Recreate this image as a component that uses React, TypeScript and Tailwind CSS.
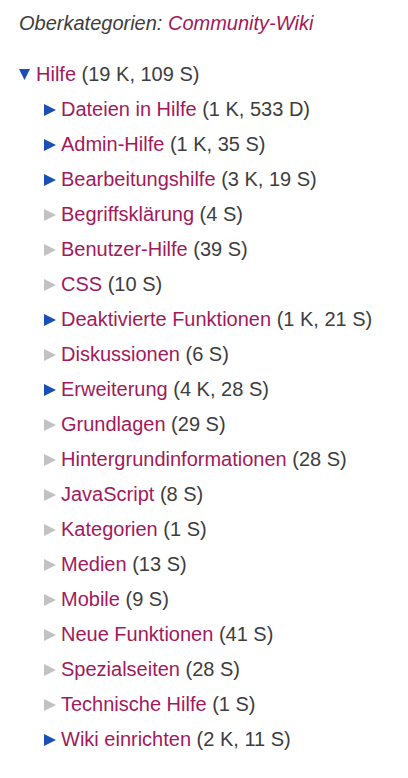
import React from "react";

const LINK = "text-[#a2195b]";

type Item = { name: string; count: string; expandable: boolean };

const items: Item[] = [
  { name: "Dateien in Hilfe", count: "(1 K, 533 D)", expandable: true },
  { name: "Admin-Hilfe", count: "(1 K, 35 S)", expandable: true },
  { name: "Bearbeitungshilfe", count: "(3 K, 19 S)", expandable: true },
  { name: "Begriffsklärung", count: "(4 S)", expandable: false },
  { name: "Benutzer-Hilfe", count: "(39 S)", expandable: false },
  { name: "CSS", count: "(10 S)", expandable: false },
  { name: "Deaktivierte Funktionen", count: "(1 K, 21 S)", expandable: true },
  { name: "Diskussionen", count: "(6 S)", expandable: false },
  { name: "Erweiterung", count: "(4 K, 28 S)", expandable: true },
  { name: "Grundlagen", count: "(29 S)", expandable: false },
  { name: "Hintergrundinformationen", count: "(28 S)", expandable: false },
  { name: "JavaScript", count: "(8 S)", expandable: false },
  { name: "Kategorien", count: "(1 S)", expandable: false },
  { name: "Medien", count: "(13 S)", expandable: false },
  { name: "Mobile", count: "(9 S)", expandable: false },
  { name: "Neue Funktionen", count: "(41 S)", expandable: false },
  { name: "Spezialseiten", count: "(28 S)", expandable: false },
  { name: "Technische Hilfe", count: "(1 S)", expandable: false },
  { name: "Wiki einrichten", count: "(2 K, 11 S)", expandable: true },
];

function RightTri({ color }: { color: string }) {
  return (
    <svg width="12" height="12" viewBox="0 0 12 12" className="shrink-0">
      <polygon points="0,0 12,6 0,12" fill={color} />
    </svg>
  );
}

function DownTri() {
  return (
    <svg width="11" height="11" viewBox="0 0 11 11" className="shrink-0">
      <polygon points="0,0 11,0 5.5,11" fill="#1a4fb5" />
    </svg>
  );
}

export default function App() {
  return (
    <div
      className="w-[408px] h-[778px] bg-white text-[#3d3d3d] text-[20px] leading-[35px] overflow-hidden"
      style={{ fontFamily: '"Liberation Sans", Arial, sans-serif' }}
    >
      <div className="pl-[19px] pt-[6px]">
        <div className="italic">
          Oberkategorien: <span className={LINK}>Community-Wiki</span>
        </div>
        <div className="mt-[16px] flex items-center gap-[6px]">
          <DownTri />
          <span>
            <span className={LINK}>Hilfe</span> (19 K, 109 S)
          </span>
        </div>
        <div className="pl-[25px]">
          {items.map((it) => (
            <div key={it.name} className="flex items-center gap-[5px]">
              <RightTri color={it.expandable ? "#1a4fb5" : "#c2c2c2"} />
              <span>
                <span className={LINK}>{it.name}</span> {it.count}
              </span>
            </div>
          ))}
        </div>
      </div>
    </div>
  );
}
